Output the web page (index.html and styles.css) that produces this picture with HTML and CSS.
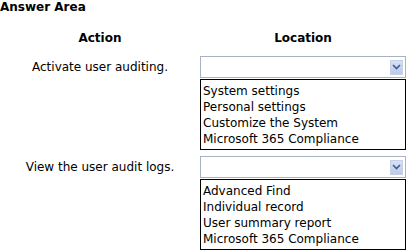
FILE: index.html
```html
<!DOCTYPE html>
<html lang="en">
<head>
    <meta charset="UTF-8">
    <title>Answer Area</title>
    <link rel="stylesheet" href="styles.css">
</head>
<body>

<h1 class="title">Answer Area</h1>

<!-- Two columns: action text on the left, dropdown on the right -->
<div class="answer-grid">
    <div class="head">Action</div>
    <div class="head">Location</div>

    <div class="action">Activate user auditing.</div>
    <div class="location">
        <div class="select">
            <span class="arrow">
                <svg width="9" height="6" viewBox="0 0 9 6"><path d="M1 1 L4.5 4.5 L8 1" fill="none" stroke="#3c5a96" stroke-width="1.6"/></svg>
            </span>
        </div>
        <ul class="options">
            <li>System settings</li>
            <li>Personal settings</li>
            <li>Customize the System</li>
            <li>Microsoft 365 Compliance</li>
        </ul>
    </div>

    <div class="action">View the user audit logs.</div>
    <div class="location">
        <div class="select">
            <span class="arrow">
                <svg width="9" height="6" viewBox="0 0 9 6"><path d="M1 1 L4.5 4.5 L8 1" fill="none" stroke="#3c5a96" stroke-width="1.6"/></svg>
            </span>
        </div>
        <ul class="options">
            <li>Advanced Find</li>
            <li>Individual record</li>
            <li>User summary report</li>
            <li>Microsoft 365 Compliance</li>
        </ul>
    </div>
</div>

</body>
</html>
```

FILE: styles.css
```css
body {
    margin: 0;
    font-family: "DejaVu Sans", Verdana, sans-serif;
    font-size: 12px;
    color: #000;
    background: #fff;
}

.title {
    margin: 0;
    font-size: 12px;
    font-weight: bold;
    line-height: 14px;
}

.answer-grid {
    display: grid;
    grid-template-columns: 200px 206px;
    row-gap: 6px;
    margin-top: 16px;
}

.head {
    font-weight: bold;
    font-size: 12px;
    text-align: center;
    line-height: 16px;
    margin-bottom: 4px;
}

.action {
    text-align: center;
    line-height: 22px;
}

/* Closed dropdown */
.select {
    box-sizing: border-box;
    height: 22px;
    border: 1px solid #a7b2c2;
    background: #fff;
    display: flex;
    align-items: center;
    justify-content: flex-end;
    padding-right: 2px;
}

.arrow {
    width: 13px;
    height: 15px;
    background: linear-gradient(#d6e0f5, #bccbea);
    border: 1px solid #c6d1e6;
    box-sizing: border-box;
    display: flex;
    align-items: center;
    justify-content: center;
}

/* Open option list */
.options {
    list-style: none;
    margin: 1px 0 0;
    padding: 3px 2px 2px;
    border: 1px solid #000;
    line-height: 16px;
}
```
